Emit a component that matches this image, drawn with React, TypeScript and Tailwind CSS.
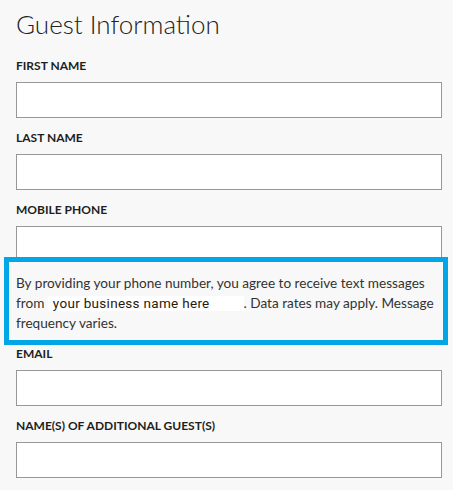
import React from 'react';

const Field: React.FC<{ label: string; className?: string }> = ({ label, className = '' }) => (
  <div className={className}>
    <label className="block text-[12px] leading-[16px] font-bold uppercase text-[#1e1e1e]">{label}</label>
    <input type="text" className="mt-2 block w-full h-[36px] bg-white border border-[#979797] outline-none" />
  </div>
);

const App: React.FC = () => {
  return (
    <div className="min-h-[490px] bg-[#f8f8f8] pl-4 pr-[11px] pt-2 pb-4 text-[#222]" style={{ fontFamily: 'Lato, "Open Sans", sans-serif' }}>
      <h1 className="text-[26px] leading-[32px] font-light text-[#222]">Guest Information</h1>

      <Field label="First Name" className="mt-[18px]" />
      <Field label="Last Name" className="mt-[12px]" />
      <Field label="Mobile Phone" className="mt-[12px]" />

      {/* consent notice, highlighted */}
      <div className="relative -mt-[5px] ml-[-12px] mr-[-6px] border-[5px] border-[#00a6e6] pl-[7px] pr-1 pt-[11px] pb-[7px] text-[13.6px] leading-[20px] text-[#333]">
        By providing your phone number, you agree to receive text messages from{' '}
        <span
          className="inline-block bg-white pl-[5px] pr-[34px] text-[13.5px] leading-[15px] tracking-[0.3px] text-[#2a1a0a]"
          style={{ fontFamily: 'Roboto, "Liberation Sans", sans-serif' }}
        >
          your business name here
        </span>
        . Data rates may apply. Message frequency varies.
      </div>

      <Field label="Email" className="mt-[1px]" />
      <Field label="Name(s) of Additional Guest(s)" className="mt-[12px]" />
    </div>
  );
};

export default App;
